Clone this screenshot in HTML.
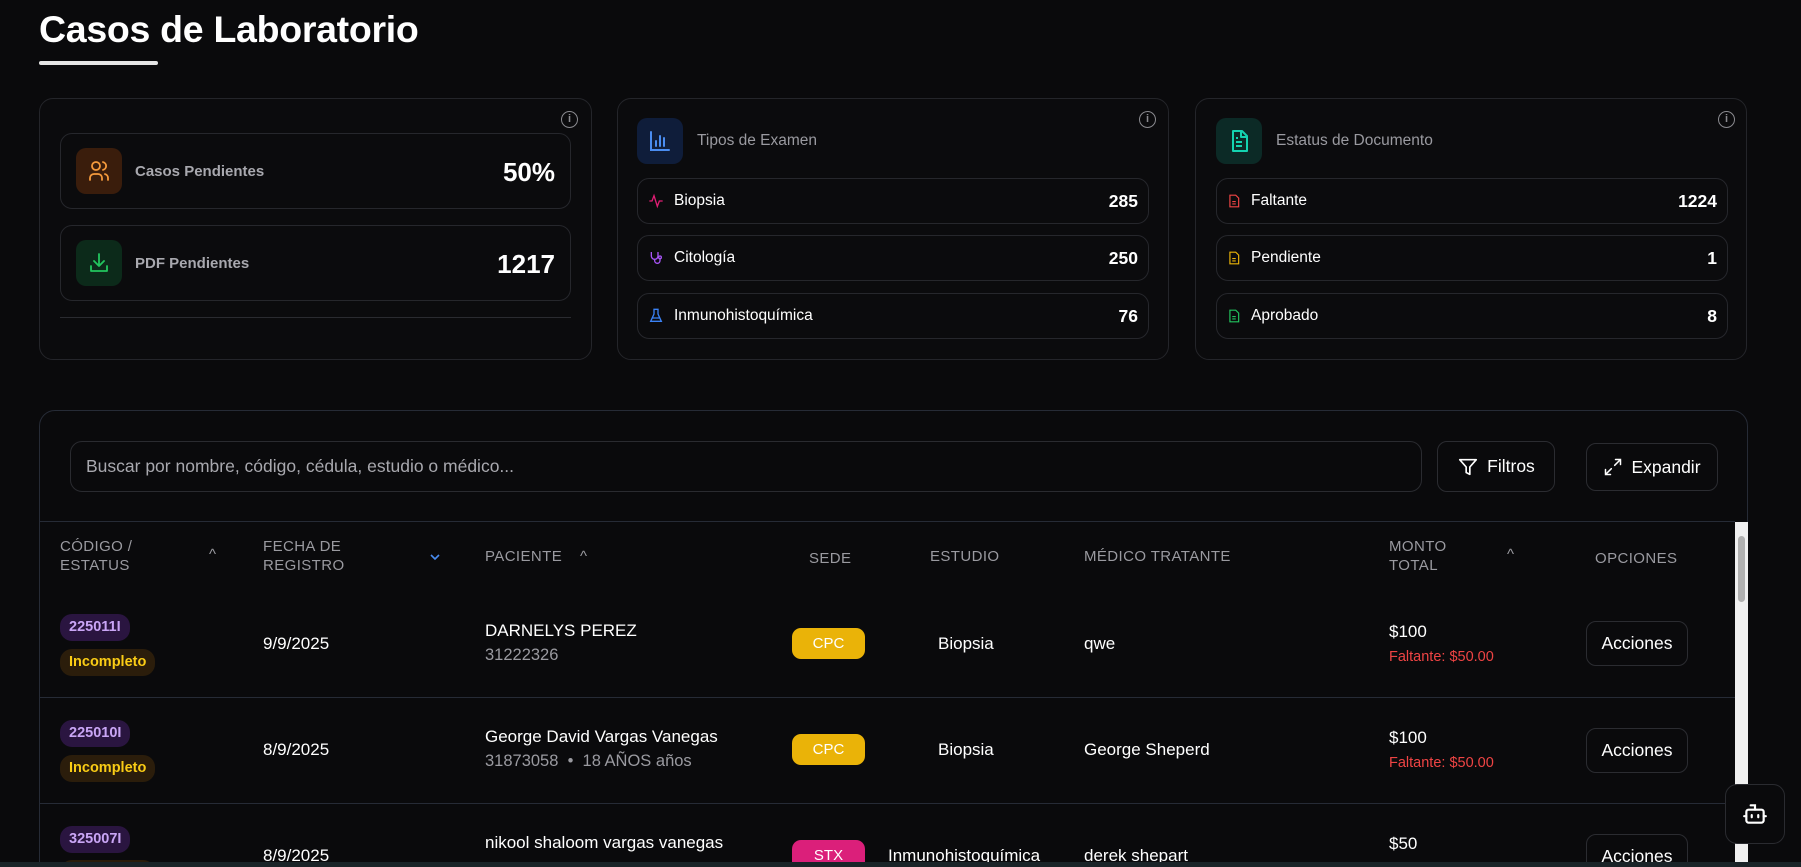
<!DOCTYPE html>
<html style="width:1801px;height:867px;overflow:hidden"><head><meta charset="utf-8"><style>
*{box-sizing:border-box;margin:0;padding:0}
body{width:1801px;height:867px;overflow:hidden;background:#0a0a0c;font-family:"Liberation Sans",sans-serif;color:#fff;position:relative}
.abs{position:absolute}
h1{position:absolute;left:39px;top:8px;font-size:37.5px;font-weight:bold;letter-spacing:-0.3px}
.ul{left:39px;top:61px;width:119px;height:4px;border-radius:2px;background:#e5e5e5}
.card{border:1px solid #24252a;border-radius:14px;background:#0b0b0d}
.box{border:1px solid #26272c;border-radius:12px}
.info{width:17px;height:17px;border:1.5px solid #8a8a8f;border-radius:50%;font-size:11px;color:#8a8a8f;text-align:center;line-height:14px;font-weight:bold}
.ic{width:46px;height:46px;border-radius:10px;display:flex;align-items:center;justify-content:center}
.lbl{font-size:15px;font-weight:bold;color:#a8a8ae}
.big{font-size:26px;font-weight:bold}
.row{display:flex;align-items:center;padding:0 10px 0 10px;font-size:15.5px}
.row .n{margin-left:auto;font-weight:bold;font-size:17.5px}
.row svg{margin-right:10px}
.th{font-size:15px;color:#9a9aa0;letter-spacing:.4px;line-height:19px}
.td{font-size:17px}
.sub{font-size:16.5px;color:#9a9aa0}
.badge{border-radius:12px;font-size:14.5px;font-weight:bold;padding:0 9px;height:27px;line-height:27px;display:inline-block}
.btn{border:1px solid #2b2c31;border-radius:10px;display:flex;align-items:center;justify-content:center;font-size:17.5px}
.hl{height:1px;background:#262b36;left:40px;width:1695px}
</style></head><body>
<h1>Casos de Laboratorio</h1>
<div class="abs ul"></div>

<div class="abs card" style="left:39px;top:98px;width:553px;height:262px"></div>
<div class="abs info" style="left:561px;top:111px">i</div>
<div class="abs box" style="left:60px;top:133px;width:511px;height:76px"></div>
<div class="abs ic" style="left:76px;top:148px;background:#3a1d0c"><svg width="24" height="24" viewBox="0 0 24 24" fill="none" stroke="#f59a3c" stroke-width="1.8" stroke-linecap="round"><circle cx="9" cy="7" r="4"/><path d="M3 21v-2a4 4 0 0 1 4-4h4a4 4 0 0 1 4 4v2M16 3.1a4 4 0 0 1 0 7.8M21 21v-2a4 4 0 0 0-3-3.9"/></svg></div>
<div class="abs lbl" style="left:135px;top:163px">Casos Pendientes</div>
<div class="abs big" style="right:1246px;top:157px">50%</div>
<div class="abs box" style="left:60px;top:225px;width:511px;height:76px"></div>
<div class="abs ic" style="left:76px;top:240px;background:#0c2a1a"><svg width="24" height="24" viewBox="0 0 24 24" fill="none" stroke="#22c55e" stroke-width="1.8" stroke-linecap="round" stroke-linejoin="round"><path d="M12 3v12M7 10l5 5 5-5M4 15v5h16v-5"/></svg></div>
<div class="abs lbl" style="left:135px;top:255px">PDF Pendientes</div>
<div class="abs big" style="right:1246px;top:249px">1217</div>
<div class="abs" style="left:60px;top:317px;width:511px;height:1px;background:#2a2b30"></div>

<div class="abs card" style="left:617px;top:98px;width:552px;height:262px"></div>
<div class="abs info" style="left:1139px;top:111px">i</div>
<div class="abs ic" style="left:637px;top:118px;background:#0f1d3a"><svg width="24" height="24" viewBox="0 0 24 24" fill="none" stroke="#4a8cf0" stroke-width="2" stroke-linecap="round"><path d="M3 3v18h18M8 17v-5M12 17V7M16 17v-8"/></svg></div>
<div class="abs" style="left:697px;top:132px;font-size:15.5px;color:#9a9aa0">Tipos de Examen</div>
<div class="abs box row" style="left:637px;top:178px;width:512px;height:46px"><svg width="16" height="16" viewBox="0 0 24 24" fill="none" stroke="#e11d74" stroke-width="2"><path d="M2 12h4l3-8 5 16 3-8h5"/></svg>Biopsia<span class="n">285</span></div>
<div class="abs box row" style="left:637px;top:235px;width:512px;height:46px"><svg width="16" height="16" viewBox="0 0 24 24" fill="none" stroke="#a855f7" stroke-width="2"><path d="M5 3v6a5 5 0 0 0 10 0V3M10 14v2a4 4 0 0 0 8 0v-3"/><circle cx="18" cy="11" r="2"/></svg>Citología<span class="n">250</span></div>
<div class="abs box row" style="left:637px;top:293px;width:512px;height:46px"><svg width="16" height="16" viewBox="0 0 24 24" fill="none" stroke="#3b82f6" stroke-width="2"><path d="M9 2v7L4 20h16L15 9V2M8 2h8M6 15h12"/></svg>Inmunohistoquímica<span class="n">76</span></div>

<div class="abs card" style="left:1195px;top:98px;width:552px;height:262px"></div>
<div class="abs info" style="left:1718px;top:111px">i</div>
<div class="abs ic" style="left:1216px;top:118px;background:#0c2a26"><svg width="24" height="24" viewBox="0 0 24 24" fill="none" stroke="#14d3b0" stroke-width="2" stroke-linejoin="round"><path d="M6 2h9l5 5v15H6zM14 2v6h6M9 13h6M9 17h6M9 9h2"/></svg></div>
<div class="abs" style="left:1276px;top:132px;font-size:15.5px;color:#9a9aa0">Estatus de Documento</div>
<div class="abs box row" style="left:1216px;top:178px;width:512px;height:46px"><svg width="14" height="16" viewBox="0 0 24 24" fill="none" stroke="#ef4444" stroke-width="2"><path d="M5 2h10l5 5v15H5zM9 13h6M9 17h6"/></svg>Faltante<span class="n">1224</span></div>
<div class="abs box row" style="left:1216px;top:235px;width:512px;height:46px"><svg width="14" height="16" viewBox="0 0 24 24" fill="none" stroke="#eab308" stroke-width="2"><path d="M5 2h10l5 5v15H5zM9 13h6M9 17h6"/></svg>Pendiente<span class="n">1</span></div>
<div class="abs box row" style="left:1216px;top:293px;width:512px;height:46px"><svg width="14" height="16" viewBox="0 0 24 24" fill="none" stroke="#22c55e" stroke-width="2"><path d="M5 2h10l5 5v15H5zM9 13h6M9 17h6"/></svg>Aprobado<span class="n">8</span></div>

<div class="abs" style="left:39px;top:410px;width:1709px;height:470px;border:1px solid #262b36;border-radius:16px;background:#0a0a0c"></div>
<div class="abs box" style="left:70px;top:441px;width:1352px;height:51px;border-color:#2a2b30"></div>
<div class="abs" style="left:86px;top:456px;font-size:17.5px;color:#a8a8ae">Buscar por nombre, código, cédula, estudio o médico...</div>
<div class="abs btn" style="left:1437px;top:441px;width:118px;height:51px"><svg width="22" height="22" viewBox="0 0 24 24" fill="none" stroke="#fff" stroke-width="1.8" stroke-linejoin="round" style="margin-right:8px"><path d="M3 4h18l-7 8v8l-4-2v-6z"/></svg>Filtros</div>
<div class="abs btn" style="left:1586px;top:443px;width:132px;height:48px"><svg width="20" height="20" viewBox="0 0 24 24" fill="none" stroke="#fff" stroke-width="1.8" stroke-linecap="round" style="margin-right:8px"><path d="M15 3h6v6M21 3l-7 7M9 21H3v-6M3 21l7-7"/></svg>Expandir</div>
<div class="abs hl" style="top:521px"></div>

<div class="abs th" style="left:60px;top:537px">CÓDIGO /<br>ESTATUS</div>
<div class="abs th" style="left:209px;top:545px">^</div>
<div class="abs th" style="left:263px;top:537px">FECHA DE<br>REGISTRO</div>
<div class="abs" style="left:429px;top:549px"><svg width="12" height="10" viewBox="0 0 12 10" fill="none" stroke="#4a8cf0" stroke-width="1.6"><path d="M2 3l4 4 4-4"/></svg></div>
<div class="abs th" style="left:485px;top:547px">PACIENTE</div>
<div class="abs th" style="left:580px;top:547px">^</div>
<div class="abs th" style="left:809px;top:549px">SEDE</div>
<div class="abs th" style="left:930px;top:547px">ESTUDIO</div>
<div class="abs th" style="left:1084px;top:547px">MÉDICO TRATANTE</div>
<div class="abs th" style="left:1389px;top:537px">MONTO<br>TOTAL</div>
<div class="abs th" style="left:1507px;top:545px">^</div>
<div class="abs th" style="left:1595px;top:549px">OPCIONES</div>

<div class="abs" style="left:1735px;top:522px;width:13px;height:345px;background:#f0f0f0"></div>
<div class="abs" style="left:1738px;top:536px;width:7px;height:66px;border-radius:4px;background:#b0b0b0"></div>

<div class="abs badge" style="left:60px;top:614px;background:#2a1540;color:#c9a5f5">225011I</div>
<div class="abs badge" style="left:60px;top:649px;background:#2b1d0b;color:#facc15">Incompleto</div>
<div class="abs td" style="left:263px;top:634px">9/9/2025</div>
<div class="abs td" style="left:485px;top:621px">DARNELYS PEREZ</div>
<div class="abs sub" style="left:485px;top:646px">31222326</div>
<div class="abs" style="left:792px;top:628px;width:73px;height:31px;border-radius:9px;background:#eab308;color:#fff;font-size:15px;text-align:center;line-height:31px">CPC</div>
<div class="abs td" style="left:938px;top:634px">Biopsia</div>
<div class="abs td" style="left:1084px;top:634px">qwe</div>
<div class="abs td" style="left:1389px;top:622px">$100</div>
<div class="abs" style="left:1389px;top:649px;font-size:14.5px;color:#ef4444">Faltante: $50.00</div>
<div class="abs btn" style="left:1586px;top:621px;width:102px;height:45px">Acciones</div>
<div class="abs hl" style="top:697px;width:1695px"></div>

<div class="abs badge" style="left:60px;top:720px;background:#2a1540;color:#c9a5f5">225010I</div>
<div class="abs badge" style="left:60px;top:755px;background:#2b1d0b;color:#facc15">Incompleto</div>
<div class="abs td" style="left:263px;top:740px">8/9/2025</div>
<div class="abs td" style="left:485px;top:727px">George David Vargas Vanegas</div>
<div class="abs sub" style="left:485px;top:752px">31873058 &nbsp;•&nbsp; 18 AÑOS años</div>
<div class="abs" style="left:792px;top:734px;width:73px;height:31px;border-radius:9px;background:#eab308;color:#fff;font-size:15px;text-align:center;line-height:31px">CPC</div>
<div class="abs td" style="left:938px;top:740px">Biopsia</div>
<div class="abs td" style="left:1084px;top:740px">George Sheperd</div>
<div class="abs td" style="left:1389px;top:728px">$100</div>
<div class="abs" style="left:1389px;top:755px;font-size:14.5px;color:#ef4444">Faltante: $50.00</div>
<div class="abs btn" style="left:1586px;top:728px;width:102px;height:45px">Acciones</div>
<div class="abs hl" style="top:803px;width:1695px"></div>

<div class="abs badge" style="left:60px;top:826px;background:#2a1540;color:#c9a5f5">325007I</div>
<div class="abs badge" style="left:60px;top:860px;background:#2b1d0b;color:#facc15">Incompleto</div>
<div class="abs td" style="left:263px;top:846px">8/9/2025</div>
<div class="abs td" style="left:485px;top:833px">nikool shaloom vargas vanegas</div>
<div class="abs" style="left:792px;top:840px;width:73px;height:31px;border-radius:9px;background:#db1f7a;color:#fff;font-size:15px;text-align:center;line-height:31px">STX</div>
<div class="abs td" style="left:888px;top:846px">Inmunohistoquímica</div>
<div class="abs td" style="left:1084px;top:846px">derek shepart</div>
<div class="abs td" style="left:1389px;top:834px">$50</div>
<div class="abs btn" style="left:1586px;top:834px;width:102px;height:45px">Acciones</div>

<div class="abs" style="left:0;top:862px;width:1801px;height:5px;background:#1a2428"></div>

<div class="abs" style="left:1725px;top:784px;width:60px;height:60px;border:1px solid #2a2b30;border-radius:12px;background:#0a0a0c;display:flex;align-items:center;justify-content:center"><svg width="26" height="26" viewBox="0 0 24 24" fill="none" stroke="#fff" stroke-width="2" stroke-linecap="round"><path d="M12 8V4H8"/><rect x="4" y="8" width="16" height="12" rx="2"/><path d="M2 14h2M20 14h2M9 13v2M15 13v2"/></svg></div>
</body></html>
